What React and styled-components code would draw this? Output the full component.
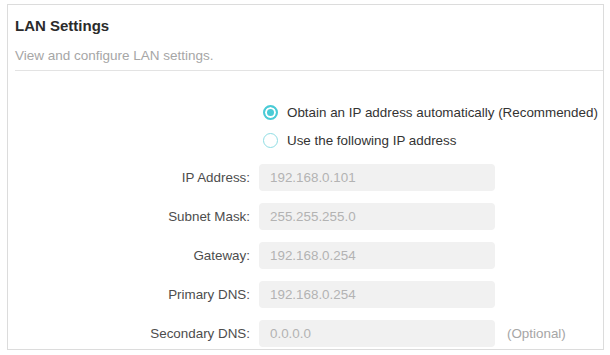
import React, { useState } from "react";
import styled, { createGlobalStyle } from "styled-components";

const GlobalStyle = createGlobalStyle`
  html, body {
    margin: 0;
    padding: 0;
    background: #ffffff;
  }
  body {
    padding: 4px 6px 0 7px;
    font-family: "Liberation Sans", Arial, sans-serif;
  }
`;

const fields = [
  { label: "IP Address:", value: "192.168.0.101" },
  { label: "Subnet Mask:", value: "255.255.255.0" },
  { label: "Gateway:", value: "192.168.0.254" },
  { label: "Primary DNS:", value: "192.168.0.254" },
  { label: "Secondary DNS:", value: "0.0.0.0", note: "(Optional)" },
];

const App = () => {
  const [mode, setMode] = useState("auto");

  return (
    <>
      <GlobalStyle />
      <Panel>
        <Header>
          <Title>LAN Settings</Title>
          <Subtitle>View and configure LAN settings.</Subtitle>
        </Header>
        <Body>
          <RadioGroup>
            <RadioRow onClick={() => setMode("auto")}>
              <Radio $checked={mode === "auto"} />
              <RadioText>Obtain an IP address automatically (Recommended)</RadioText>
            </RadioRow>
            <RadioRow onClick={() => setMode("static")}>
              <Radio $checked={mode === "static"} />
              <RadioText>Use the following IP address</RadioText>
            </RadioRow>
          </RadioGroup>
          <Form>
            {fields.map((f) => (
              <React.Fragment key={f.label}>
                <Label>{f.label}</Label>
                <Input value={f.value} readOnly />
                <Note>{f.note || ""}</Note>
              </React.Fragment>
            ))}
          </Form>
        </Body>
      </Panel>
    </>
  );
};

export default App;

const Panel = styled.section`
  width: 597px;
  height: 346px;
  box-sizing: border-box;
  border: 1px solid #dcdcdc;
  background: #ffffff;
`;

const Header = styled.header`
  margin-left: 7px;
  padding-top: 11px;
  padding-bottom: 5px;
  border-bottom: 1px solid #e3e3e3;
`;

const Title = styled.h2`
  margin: 0;
  font-size: 15px;
  line-height: 20px;
  font-weight: bold;
  color: #2b2b2b;
`;

const Subtitle = styled.p`
  margin: 11px 0 0;
  font-size: 13.5px;
  line-height: 18px;
  color: #a6a6a6;
`;

const Body = styled.div`
  padding-top: 27px;
`;

const RadioGroup = styled.div`
  display: flex;
  flex-direction: column;
  padding-left: 255px;
  margin-bottom: 10px;
`;

const RadioRow = styled.label`
  display: flex;
  align-items: center;
  gap: 9px;
  height: 28px;
  cursor: pointer;
`;

const Radio = styled.span`
  box-sizing: border-box;
  width: 15px;
  height: 15px;
  border-radius: 50%;
  border: ${(p) => (p.$checked ? "2px solid #4acbd6" : "1px solid #8fdde4")};
  background: ${(p) => (p.$checked ? "#4acbd6" : "#ffffff")};
  box-shadow: ${(p) => (p.$checked ? "inset 0 0 0 2px #ffffff" : "none")};
  flex-shrink: 0;
`;

const RadioText = styled.span`
  font-size: 13.4px;
  color: #333333;
`;

const Form = styled.div`
  display: grid;
  grid-template-columns: 242px 236px auto;
  column-gap: 9px;
  row-gap: 12px;
  align-items: center;
`;

const Label = styled.span`
  text-align: right;
  font-size: 13.4px;
  color: #4d4d4d;
`;

const Input = styled.input`
  box-sizing: border-box;
  height: 27px;
  width: 236px;
  border: none;
  border-radius: 4px;
  background: #f1f1f1;
  padding: 0 11px;
  font-family: "Liberation Sans", Arial, sans-serif;
  font-size: 13.4px;
  color: #b3b3b3;
  outline: none;
`;

const Note = styled.span`
  margin-left: 3px;
  font-size: 13.4px;
  color: #a6a6a6;
`;
